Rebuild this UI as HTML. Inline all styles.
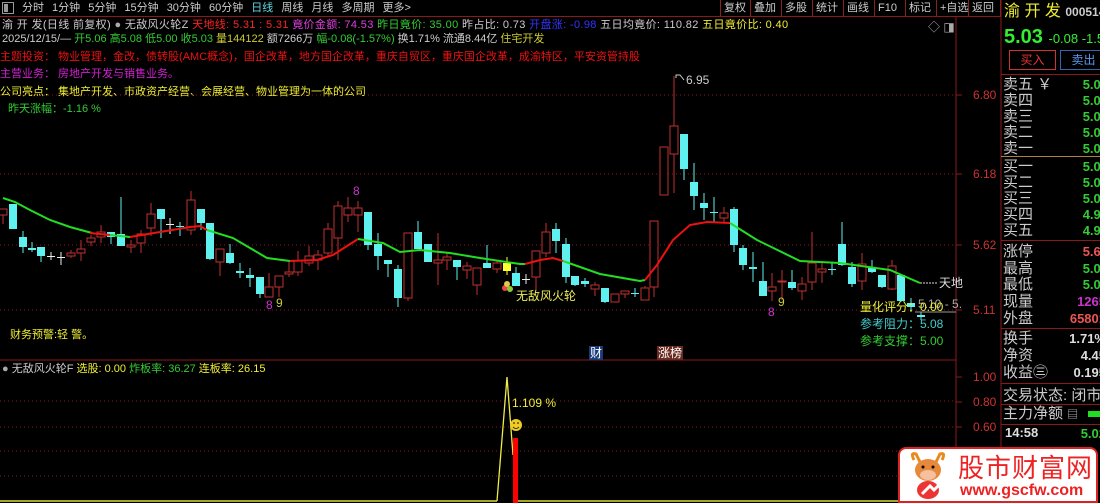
<!DOCTYPE html>
<html><head><meta charset="utf-8">
<style>
*{margin:0;padding:0;box-sizing:border-box}
body{width:1100px;height:503px;background:#000;overflow:hidden;position:relative;font-family:"Liberation Sans","Noto Sans CJK SC",sans-serif;font-size:12px;color:#ddd}
.a{position:absolute;white-space:nowrap;line-height:14px}
.h{font-size:11px}
.tb{position:absolute;top:0;height:16px;line-height:16px;font-size:11px;color:#ccc;white-space:nowrap}
.btn{position:absolute;top:0;height:16px;border-left:1px solid #8a2020;padding:0 3px;color:#ccc;line-height:16px;font-size:11px;white-space:nowrap}
.rp{position:absolute;left:1003px;font-size:15px;color:#ccc;line-height:17px;white-space:nowrap}
.rv{position:absolute;right:0;font-size:13px;font-weight:bold;line-height:17px;white-space:nowrap}
.hl{position:absolute;left:1001px;width:99px;height:1px;background:#8a1a1a}
</style></head><body>
<div class="a" style="left:2px;top:2px;width:12px;height:12px;border:1px solid #999;"></div>
<div class="a" style="left:4px;top:4px;width:4px;height:8px;background:#999;"></div>
<div class="tb" style="left:22px;word-spacing:5px">分时 1分钟 5分钟 15分钟 30分钟 60分钟 <span style="color:#5fd8e0">日线</span> 周线 月线 多周期 更多&gt;</div>
<div class="btn" style="left:720px">复权</div><div class="btn" style="left:750px">叠加</div><div class="btn" style="left:781px">多股</div><div class="btn" style="left:812px">统计</div><div class="btn" style="left:843px">画线</div><div class="btn" style="left:874px">F10</div><div class="btn" style="left:905px">标记</div><div class="btn" style="left:936px">+自选</div><div class="btn" style="left:968px;border-right:1px solid #8a2020;width:33px">返回</div>
<div style="position:absolute;left:0;top:16px;width:1001px;height:1px;background:#8a1a1a"></div>
<div class="a h" style="left:2px;top:18px;color:#ccc;letter-spacing:0.35px">渝 开 发(日线 前复权) <span style="color:#aaa">●</span> 无敌风火轮Z <span style="color:#f22">天地线: 5.31 : 5.31</span> <span style="color:#e040e0">竟价金额: 74.53</span> <span style="color:#3c3">昨日竟价: 35.00</span> 昨占比: 0.73 <span style="color:#33f">开盘涨: -0.98</span> 五日均竟价: 110.82 <span style="color:#ee3">五日竟价比: 0.40</span></div>
<div class="a h" style="left:2px;top:32px;color:#ccc">2025/12/15/— <span style="color:#3c3">开5.06 高5.08 低5.00 收5.03</span> <span style="color:#cc3">量144122</span> 额7266万 <span style="color:#3c3">幅-0.08(-1.57%)</span> 换1.71% 流通8.44亿 <span style="color:#cc3">住宅开发</span></div>
<div class="a h" style="left:0;top:50px;color:#e11">主题投资：&nbsp;物业管理，金改，债转股(AMC概念)，国企改革，地方国企改革，重庆自贸区，重庆国企改革，成渝特区，平安资管持股</div>
<div class="a h" style="left:0;top:67px;color:#d020d0">主营业务：&nbsp;房地产开发与销售业务。</div>
<div class="a h" style="left:0;top:85px;color:#ee3">公司亮点：&nbsp;集地产开发、市政资产经营、会展经营、物业管理为一体的公司</div>
<div class="a h" style="left:8px;top:102px;color:#3c3">昨天涨幅：-1.16 %</div>
<div class="a" style="left:928px;top:20px;color:#aaa">◇ ◨</div>
<svg id="c" width="1100" height="503" style="position:absolute;left:0;top:0">
<g stroke="#8a1a1a" stroke-dasharray="1,3">
<line x1="0" y1="95" x2="956" y2="95"/><line x1="0" y1="174" x2="956" y2="174"/><line x1="0" y1="245" x2="956" y2="245"/><line x1="0" y1="310" x2="956" y2="310"/>
<line x1="0" y1="401" x2="956" y2="401"/><line x1="0" y1="427" x2="956" y2="427"/><line x1="0" y1="451" x2="956" y2="451"/><line x1="0" y1="476" x2="956" y2="476"/>
</g>
<line x1="956" y1="16" x2="956" y2="503" stroke="#8a1a1a"/>
<line x1="1001" y1="0" x2="1001" y2="503" stroke="#8a1a1a"/>
<line x1="0" y1="360" x2="956" y2="360" stroke="#8a1a1a"/>
<g stroke="#8a1a1a"><line x1="956" y1="95" x2="962" y2="95"/><line x1="956" y1="174" x2="962" y2="174"/><line x1="956" y1="245" x2="962" y2="245"/><line x1="956" y1="310" x2="962" y2="310"/><line x1="956" y1="377" x2="962" y2="377"/><line x1="956" y1="402" x2="962" y2="402"/><line x1="956" y1="427" x2="962" y2="427"/></g>
<g id="cd"></g>
<polyline fill="none" stroke="#2d2" stroke-width="2" points="3,198 15,202 30,210 50,220 70,227 92,233"/>
<polyline fill="none" stroke="#e11" stroke-width="2" points="90,233 110,235"/>
<polyline fill="none" stroke="#2d2" stroke-width="2" points="110,235 130,237"/>
<polyline fill="none" stroke="#e11" stroke-width="2" points="130,237 160,232 190,227 200,226 207,230"/>
<polyline fill="none" stroke="#2d2" stroke-width="2" points="207,230 233,238 267,258 290,261"/>
<polyline fill="none" stroke="#e11" stroke-width="2" points="290,261 317,260 333,255 358,239"/>
<polyline fill="none" stroke="#2d2" stroke-width="2" points="358,239 383,243 400,252 420,250 450,253 480,258 520,264 525,264"/>
<polyline fill="none" stroke="#e11" stroke-width="2" points="525,264 540,260 553,258 563,261"/>
<polyline fill="none" stroke="#2d2" stroke-width="2" points="563,261 600,274 640,281 645,280"/>
<polyline fill="none" stroke="#e11" stroke-width="2" points="645,280 657,265 673,240 690,225 707,222 730,223"/>
<polyline fill="none" stroke="#2d2" stroke-width="2" points="730,223 757,240 800,261 840,263 890,270 920,283"/>
<line x1="920" y1="283" x2="938" y2="283" stroke="#ddd" stroke-dasharray="2,1"/>
<line x1="915" y1="312" x2="956" y2="312" stroke="#999"/>
<path d="M676 78 L676 75 L680 75 L684 80" stroke="#ccc" fill="none"/>
<line x1="0" y1="501" x2="497" y2="501" stroke="#dd3" stroke-width="1.5"/>
<line x1="518" y1="501" x2="956" y2="501" stroke="#dd3" stroke-width="1.5"/>
<polyline fill="none" stroke="#ee4" stroke-width="1.3" points="497,501 507,377 513,455"/>
<rect x="513" y="438" width="5" height="65" fill="#f00"/>
<circle cx="516" cy="425" r="6" fill="#ec2"/>
<circle cx="514" cy="423" r="0.8" fill="#000"/><circle cx="518" cy="423" r="0.8" fill="#000"/>
<path d="M513 427 Q516 430 519 427" stroke="#000" fill="none" stroke-width="0.8"/>
<circle cx="505" cy="288" r="3" fill="#e44"/><circle cx="510" cy="289" r="3" fill="#8c3"/><circle cx="507" cy="284" r="3" fill="#dc4"/>
</svg>
<div class="a" style="left:686px;top:73px;color:#ccc">6.95</div>
<div class="a" style="left:353px;top:184px;color:#c3c">8</div>
<div class="a" style="left:266px;top:298px;color:#c3c">8</div>
<div class="a" style="left:276px;top:296px;color:#cc3">9</div>
<div class="a" style="left:768px;top:305px;color:#c3c">8</div>
<div class="a" style="left:778px;top:295px;color:#cc3">9</div>
<div class="a" style="left:516px;top:289px;color:#ee5;font-size:12px">无敌风火轮</div>
<div class="a" style="left:939px;top:276px;color:#ddd">天地</div>
<div class="a" style="left:918px;top:297px;color:#aaa">5.10 - 5.</div>
<div class="a" style="left:860px;top:300px;color:#ee3">量化评分：0.00</div>
<div class="a" style="left:860px;top:317px;color:#4cc">参考阻力：5.08</div>
<div class="a" style="left:860px;top:334px;color:#3c3">参考支撑：5.00</div>
<div class="a h" style="left:10px;top:328px;color:#ee3">财务预警:轻 警。</div>
<div class="a" style="left:589px;top:346px;color:#fff;background:#1a3a7a;padding:0 1px">财</div>
<div class="a" style="left:657px;top:346px;color:#fff;background:#6a2a20;padding:0 1px">涨榜</div>
<div class="a h" style="left:2px;top:362px;color:#ccc"><span style="color:#aaa">●</span> 无敌风火轮F <span style="color:#ee3">选股: 0.00</span> <span style="color:#3c3">炸板率: 36.27</span> <span style="color:#ee3">连板率: 26.15</span></div>
<div class="a" style="left:512px;top:396px;color:#ee3">1.109 %</div>
<div class="a" style="left:973px;top:88px;color:#c33">6.80</div>
<div class="a" style="left:973px;top:167px;color:#c33">6.18</div>
<div class="a" style="left:973px;top:238px;color:#c33">5.62</div>
<div class="a" style="left:973px;top:303px;color:#c33">5.11</div>
<div class="a" style="left:973px;top:370px;color:#c33">1.00</div>
<div class="a" style="left:973px;top:395px;color:#c33">0.80</div>
<div class="a" style="left:973px;top:420px;color:#c33">0.60</div>
<div style="position:absolute;left:1002px;top:0;width:98px;height:503px;overflow:hidden">
<div class="a" style="left:2px;top:3px;font-size:16px;color:#ee3;line-height:18px">渝 开 发 <span style="font-size:12px;color:#ccc;font-weight:bold">000514</span></div>
<div class="a" style="left:2px;top:26px;font-size:20px;font-weight:bold;color:#3e3;line-height:22px">5.03 <span style="font-size:13px;font-weight:normal">-0.08 -1.57%</span></div>
<div class="a" style="left:7px;top:50px;width:47px;height:20px;border:1px solid #c33;color:#e33;text-align:center;line-height:18px">买入</div>
<div class="a" style="left:58px;top:50px;width:47px;height:20px;border:1px solid #36a;color:#59e;text-align:center;line-height:18px">卖出</div>
</div>
<div class="hl" style="top:74px"></div>
<div class="hl" style="top:156px;background:#b08040"></div>
<div class="hl" style="top:240px"></div>
<div class="hl" style="top:328px"></div>
<div class="hl" style="top:383px"></div>
<div class="hl" style="top:404px"></div>
<div class="hl" style="top:424px"></div>
<div style="position:absolute;left:1001px;top:75px;width:99px;height:370px;overflow:hidden">
<div class="rp" style="left:2px;top:1px">卖五 ￥</div><div class="rv" style="top:1px;right:-8px;color:#3c3">5.08</div>
<div class="rp" style="left:2px;top:17px">卖四</div><div class="rv" style="top:17px;right:-8px;color:#3c3">5.07</div>
<div class="rp" style="left:2px;top:33px">卖三</div><div class="rv" style="top:33px;right:-8px;color:#3c3">5.06</div>
<div class="rp" style="left:2px;top:49px">卖二</div><div class="rv" style="top:49px;right:-8px;color:#3c3">5.05</div>
<div class="rp" style="left:2px;top:65px">卖一</div><div class="rv" style="top:65px;right:-8px;color:#3c3">5.04</div>
<div class="rp" style="left:2px;top:83px">买一</div><div class="rv" style="top:83px;right:-8px;color:#3c3">5.03</div>
<div class="rp" style="left:2px;top:99px">买二</div><div class="rv" style="top:99px;right:-8px;color:#3c3">5.02</div>
<div class="rp" style="left:2px;top:115px">买三</div><div class="rv" style="top:115px;right:-8px;color:#3c3">5.01</div>
<div class="rp" style="left:2px;top:131px">买四</div><div class="rv" style="top:131px;right:-8px;color:#3c3">4.99</div>
<div class="rp" style="left:2px;top:147px">买五</div><div class="rv" style="top:147px;right:-8px;color:#3c3">4.98</div>
<div class="rp" style="left:2px;top:168px">涨停</div><div class="rv" style="top:168px;right:-8px;color:#e55">5.64</div>
<div class="rp" style="left:2px;top:185px">最高</div><div class="rv" style="top:185px;right:-8px;color:#3c3">5.08</div>
<div class="rp" style="left:2px;top:201px">最低</div><div class="rv" style="top:201px;right:-8px;color:#3c3">5.00</div>
<div class="rp" style="left:2px;top:218px">现量</div><div class="rv" style="top:218px;right:-6px;color:#c3c">1265</div>
<div class="rp" style="left:2px;top:235px">外盘</div><div class="rv" style="top:235px;right:-6px;color:#e55">65801</div>
<div class="rp" style="left:2px;top:255px">换手</div><div class="rv" style="top:255px;right:-6px;color:#ddd">1.71%</div>
<div class="rp" style="left:2px;top:272px">净资</div><div class="rv" style="top:272px;right:-6px;color:#ddd">4.45</div>
<div class="rp" style="left:2px;top:289px">收益㊂</div><div class="rv" style="top:289px;right:-6px;color:#ddd">0.195</div>
<div class="rp" style="left:2px;top:312px">交易状态: 闭市阶段</div>
<div class="rp" style="left:2px;top:330px">主力净额 <span style="font-size:11px">▤</span></div>
<div style="position:absolute;left:87px;top:336px;width:20px;height:6px;background:#2d2"></div>
<div class="a" style="left:4px;top:351px;color:#ddd;font-weight:bold;font-size:13px">14:58</div>
<div class="rv" style="top:350px;right:-6px;color:#3c3">5.02</div>
</div>
<div style="position:absolute;left:898px;top:447px;width:200px;height:56px;background:#fff;border:2px solid #d22;border-radius:8px 8px 0 0"></div>
<svg style="position:absolute;left:904px;top:450px" width="50" height="52">
<path d="M10 10 Q6 2 12 4 Q14 8 16 12 M38 10 Q42 2 36 4 Q34 8 32 12" stroke="#e88a20" stroke-width="3" fill="none"/>
<ellipse cx="24" cy="20" rx="13" ry="11" fill="#e8883a"/>
<ellipse cx="24" cy="25" rx="8" ry="5" fill="#f5c0a0"/>
<circle cx="19" cy="17" r="1.5" fill="#000"/><circle cx="29" cy="17" r="1.5" fill="#000"/>
<ellipse cx="24" cy="40" rx="11" ry="9" fill="#e33"/>
<path d="M18 44 L26 36 L30 40 L40 30" stroke="#fff" stroke-width="3" fill="none"/>
<path d="M36 28 L42 28 L42 34 Z" fill="#fff"/>
</svg>
<div class="a" style="left:958px;top:452px;font-size:26px;line-height:30px;color:#e22;font-family:'Noto Sans CJK SC',sans-serif;letter-spacing:1px">股市财富网</div>
<div class="a" style="left:960px;top:482px;font-size:16px;line-height:18px;color:#e22;font-weight:bold">www.gscfw.com</div>
<script>
var R='#c03030',C='#5ff0f0',W='#eee',Y='#ff3';
var d=[[3,209,215,209,224,R],[13,204,229,204,229,C],[23,237,247,231,253,C],[32,248,250,242,252,C],[41,247,256,247,262,C],[51,256,257,252,260,W],[61,257,258,252,265,W],[71,253,256,250,258,R],[81,249,253,240,261,R],[91,238,242,235,246,R],[101,232,237,225,243,R],[111,232,237,232,244,C],[121,234,246,197,246,C],[131,245,247,240,253,R],[141,234,243,230,253,R],[151,214,228,203,236,R],[161,209,219,209,238,C],[170,224,225,218,234,W],[180,226,227,222,236,C],[191,200,230,191,235,R],[201,209,223,209,230,C],[210,223,259,223,260,C],[220,249,262,249,276,R],[230,253,263,244,264,C],[240,271,273,263,278,C],[250,275,278,268,287,C],[260,277,294,277,298,C],[269,287,297,273,297,R],[279,276,287,276,297,R],[289,272,274,262,277,R],[298,261,272,251,276,R],[309,256,263,246,266,R],[318,255,260,250,270,R],[328,229,253,223,256,R],[338,206,238,201,260,R],[348,208,215,197,222,R],[358,208,215,201,232,R],[368,212,245,212,250,C],[378,244,256,233,270,C],[388,260,264,260,277,C],[398,269,298,265,307,C],[408,233,298,233,301,R],[418,232,249,221,249,C],[428,244,262,244,262,C],[438,260,263,233,285,R],[447,257,260,252,270,R],[457,260,267,260,280,C],[467,266,270,262,279,R],[477,268,285,268,295,R],[487,263,268,245,268,C],[497,263,269,260,273,R],[507,263,271,257,275,Y],[516,273,286,267,286,C],[526,279,280,274,284,W],[536,251,277,251,290,R],[546,232,253,223,257,R],[556,229,241,223,253,C],[566,244,277,238,283,C],[575,276,285,276,286,C],[585,281,284,278,287,C],[595,285,289,282,296,R],[605,288,302,288,303,C],[615,294,302,294,302,R],[625,291,294,291,298,R],[635,293,294,288,297,C],[645,288,300,286,300,R],[654,221,287,221,297,R],[664,147,195,147,195,R],[674,126,154,76,193,R],[684,134,169,134,180,C],[694,182,196,163,210,C],[704,203,208,193,220,C],[714,212,213,197,223,C],[724,213,218,207,222,R],[734,209,245,207,252,C],[743,248,265,245,270,C],[753,267,269,252,282,C],[763,281,296,262,296,C],[772,287,291,273,301,R],[782,281,282,270,300,R],[792,282,288,270,290,C],[802,284,291,277,300,R],[812,263,282,232,290,R],[822,269,272,262,283,R],[832,269,270,262,275,C],[842,244,265,222,266,C],[852,267,284,262,287,C],[862,264,281,253,290,R],[872,267,272,260,273,C],[882,275,287,275,288,C],[892,266,289,260,290,R],[901,275,301,275,302,C],[911,303,307,298,312,C],[921,315,317,312,320,C]];
var g=document.getElementById('cd'),s='';
d.forEach(function(c){var x=c[0],col=c[5],h=Math.max(1,c[2]-c[1]);
s+='<line x1="'+x+'" y1="'+c[3]+'" x2="'+x+'" y2="'+c[4]+'" stroke="'+col+'"/>';
if(col==R)s+='<rect x="'+(x-4)+'" y="'+c[1]+'" width="8" height="'+h+'" fill="#000" stroke="'+col+'"/>';
else s+='<rect x="'+(x-4)+'" y="'+c[1]+'" width="8" height="'+h+'" fill="'+col+'"/>';});
g.innerHTML=s;
</script>
</body></html>
